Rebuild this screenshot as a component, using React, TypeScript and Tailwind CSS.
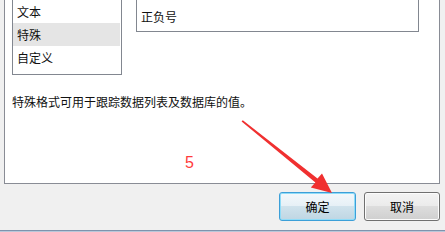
import React from "react";

const font = { fontFamily: '"Noto Sans CJK SC", "Noto Sans", sans-serif' };

export default function App() {
  const leftItems = ["科学记数", "文本", "特殊", "自定义"];
  const rightItems = ["中文大写数字", "人民币大写", "正负号"];
  return (
    <div
      className="relative w-[445px] h-[232px] overflow-hidden bg-[#f0f0f0] flex flex-col text-[12px] text-[#111]"
      style={font}
    >
      <div className="ml-[4px] mt-[-40px] w-[436px] h-[224px] shrink-0 bg-white border-x border-b border-[#898c95] flex flex-col">
        <div className="flex items-start">
          <div className="ml-[7px] mt-[16px] w-[110px] border border-[#828790] pb-[5px]">
            {leftItems.map((t) => (
              <div
                key={t}
                className={`h-[23px] mr-[1px] pl-[4px] flex items-center leading-none ${
                  t === "特殊" ? "bg-[#e5e5e5]" : ""
                }`}
              >
                {t}
              </div>
            ))}
          </div>
          <div className="ml-[14px] mt-[-2px] w-[283px] border border-[#828790] pb-[3px]">
            {rightItems.map((t) => (
              <div key={t} className="h-[23px] pl-[4px] flex items-center leading-none">
                {t}
              </div>
            ))}
          </div>
        </div>
        <div className="mt-[19px] pl-[7px] leading-[16px]">
          特殊格式可用于跟踪数据列表及数据库的值。
        </div>
      </div>

      <div className="mt-[8px] flex justify-end gap-[8px] pr-[5px]">
        <button
          className="relative w-[77px] h-[29px] rounded-[3px] border border-[#3c9fd8] bg-[linear-gradient(to_bottom,#f3f8fb_0%,#e6f0f6_48%,#cfe2ec_50%,#bfd6e3_100%)] shadow-[inset_0_0_0_1px_#8fdcf8] flex items-center justify-center text-[12px] text-black"
          style={font}
        >
          确定
        </button>
        <button
          className="w-[76px] h-[29px] rounded-[3px] border border-[#707070] bg-[linear-gradient(to_bottom,#f3f3f3_0%,#ebebeb_48%,#dddddd_50%,#cfcfcf_100%)] shadow-[inset_0_0_0_1px_#fcfcfc] flex items-center justify-center text-[12px] text-black"
          style={font}
        >
          取消
        </button>
      </div>

      <div className="mt-[9px] h-[1px] bg-[#7f93ad]" />
      <div className="h-[1px] bg-[#b9c7d9]" />

      <svg
        className="absolute left-0 top-0 pointer-events-none"
        width="445"
        height="232"
        viewBox="0 0 445 232"
      >
        <polygon
          points="242,121 242.8,120.2 317.5,178.6 322,173.5 332,193 310.8,187.5 315.4,182.4 241.6,121.4"
          fill="#f03030"
        />
      </svg>
      <div
        className="absolute left-[185px] top-[153px] text-[16px] leading-[20px] text-[#ff3b3b]"
        style={{ fontFamily: '"Liberation Sans", sans-serif' }}
      >
        5
      </div>
    </div>
  );
}
